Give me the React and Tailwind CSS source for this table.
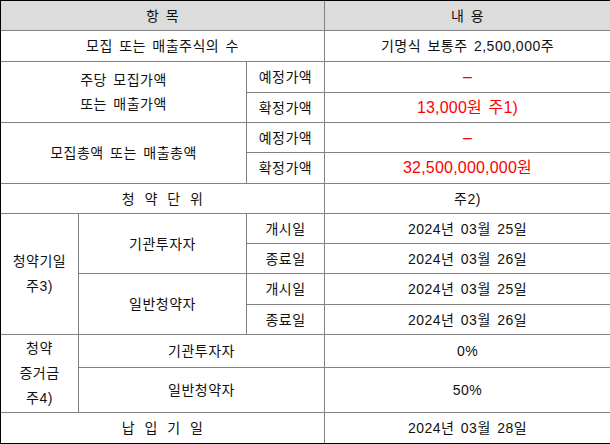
import React from "react";

const font = { fontFamily: '"Liberation Sans", "Noto Sans CJK KR", sans-serif' };

function Cell({ className = "", children }) {
  return (
    <div className={"flex items-center justify-center text-center border-[#808080] " + className}>
      {children}
    </div>
  );
}

const red = "text-[#ff0000] text-[16px] tracking-[0.2px]";

export default function App() {
  return (
    <div
      className="w-[610px] h-[444px] overflow-hidden bg-white text-[14px] text-[#111] leading-[24px] tracking-[0.5px] [word-spacing:2px]"
      style={font}
    >
      <div className="grid grid-cols-[77px_168px_78px_286px] grid-rows-[29px_31px_31px_30px_30px_31px_30px_30px_30px_31px_30px_33px_45px_31px] border-l border-t border-b border-black w-[610px] h-[444px]">
        {/* header */}
        <Cell className="col-start-1 col-span-3 row-start-1 bg-[#dcdcdc]">항 목</Cell>
        <Cell className="col-start-4 row-start-1 bg-[#dcdcdc] border-l">내 용</Cell>

        {/* row 2 */}
        <Cell className="col-start-1 col-span-3 row-start-2 border-t">모집 또는 매출주식의 수</Cell>
        <Cell className="col-start-4 row-start-2 border-t border-l">기명식 보통주 2,500,000주</Cell>

        {/* rows 3-4 */}
        <Cell className="col-start-1 col-span-2 row-start-3 row-span-2 border-t">
          <div>
            주당 모집가액
            <br />
            또는 매출가액
          </div>
        </Cell>
        <Cell className="col-start-3 row-start-3 border-t border-l">예정가액</Cell>
        <Cell className={"col-start-4 row-start-3 border-t border-l " + red}>–</Cell>
        <Cell className="col-start-3 row-start-4 border-t border-l">확정가액</Cell>
        <Cell className={"col-start-4 row-start-4 border-t border-l " + red}>13,000원 주1)</Cell>

        {/* rows 5-6 */}
        <Cell className="col-start-1 col-span-2 row-start-5 row-span-2 border-t">모집총액 또는 매출총액</Cell>
        <Cell className="col-start-3 row-start-5 border-t border-l">예정가액</Cell>
        <Cell className={"col-start-4 row-start-5 border-t border-l " + red}>–</Cell>
        <Cell className="col-start-3 row-start-6 border-t border-l">확정가액</Cell>
        <Cell className={"col-start-4 row-start-6 border-t border-l " + red}>32,500,000,000원</Cell>

        {/* row 7 */}
        <Cell className="col-start-1 col-span-3 row-start-7 border-t [word-spacing:5px]">청 약 단 위</Cell>
        <Cell className="col-start-4 row-start-7 border-t border-l">주2)</Cell>

        {/* rows 8-11 */}
        <Cell className="col-start-1 row-start-8 row-span-4 border-t">
          <div className="leading-[25px]">
            청약기일
            <br />
            주3)
          </div>
        </Cell>
        <Cell className="col-start-2 row-start-8 row-span-2 border-t border-l">기관투자자</Cell>
        <Cell className="col-start-3 row-start-8 border-t border-l">개시일</Cell>
        <Cell className="col-start-4 row-start-8 border-t border-l">2024년 03월 25일</Cell>
        <Cell className="col-start-3 row-start-9 border-t border-l">종료일</Cell>
        <Cell className="col-start-4 row-start-9 border-t border-l">2024년 03월 26일</Cell>
        <Cell className="col-start-2 row-start-10 row-span-2 border-t border-l">일반청약자</Cell>
        <Cell className="col-start-3 row-start-10 border-t border-l">개시일</Cell>
        <Cell className="col-start-4 row-start-10 border-t border-l">2024년 03월 25일</Cell>
        <Cell className="col-start-3 row-start-11 border-t border-l">종료일</Cell>
        <Cell className="col-start-4 row-start-11 border-t border-l">2024년 03월 26일</Cell>

        {/* rows 12-13 */}
        <Cell className="col-start-1 row-start-12 row-span-2 border-t">
          <div className="leading-[25px]">
            청약
            <br />
            증거금
            <br />
            주4)
          </div>
        </Cell>
        <Cell className="col-start-2 col-span-2 row-start-12 border-t border-l">기관투자자</Cell>
        <Cell className="col-start-4 row-start-12 border-t border-l">0%</Cell>
        <Cell className="col-start-2 col-span-2 row-start-13 border-t border-l">일반청약자</Cell>
        <Cell className="col-start-4 row-start-13 border-t border-l">50%</Cell>

        {/* row 14 */}
        <Cell className="col-start-1 col-span-3 row-start-14 border-t [word-spacing:5px]">납 입 기 일</Cell>
        <Cell className="col-start-4 row-start-14 border-t border-l">2024년 03월 28일</Cell>
      </div>
    </div>
  );
}
